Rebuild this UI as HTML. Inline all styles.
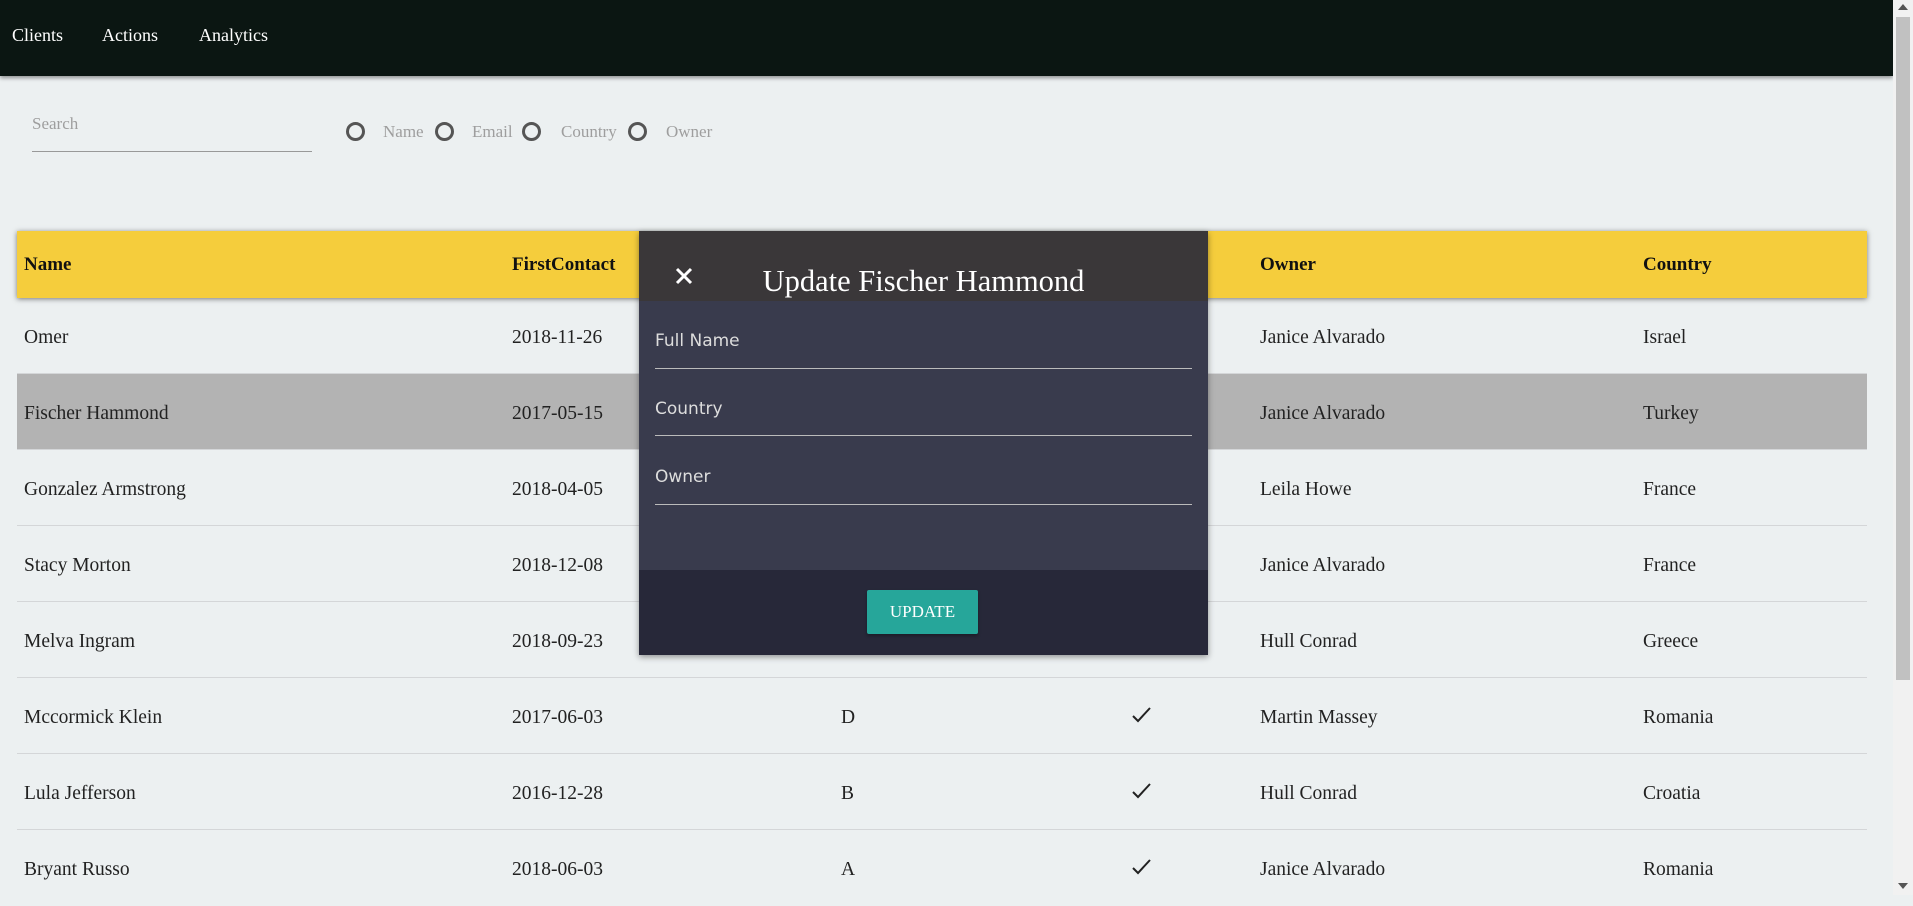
<!DOCTYPE html>
<html><head><meta charset="utf-8"><style>
*{margin:0;padding:0;box-sizing:border-box}
body{width:1913px;height:895px;overflow:hidden;background:#ecf0f1;font-family:"Liberation Serif",serif;position:relative;color:#222}
.a{position:absolute;white-space:nowrap}
.nav{left:0;top:0;width:1893px;height:76px;background:#0b1612;box-shadow:0 2px 4px rgba(0,0,0,.4)}
.nav span{position:absolute;top:25px;color:#fff;font-size:18px}
.sb{left:1893px;top:0;width:20px;height:895px;background:#f1f1f1}
.thumb{left:1896px;top:17px;width:14px;height:663px;background:#c1c1c1}
.rad{width:19px;height:19px;border:3px solid #555;border-radius:50%;top:121px}
.lbl{top:122px;color:#9e9e9e;font-size:17px}
.hdr{left:17px;top:231px;width:1850px;height:67px;background:#f5cd3c;box-shadow:0 1px 5px rgba(0,0,0,.5)}
.hdr span{position:absolute;top:23px;font-weight:bold;font-size:19px;color:#111}
.row{left:17px;width:1850px;height:76px;border-bottom:1px solid #d4d6d8}
.row span{position:absolute;top:29px;font-size:19.5px;color:#222}
.chk{position:absolute;top:25px;left:1112px}
.modal{left:639px;top:231px;width:569px;height:424px;box-shadow:0 2px 6px rgba(0,0,0,.4)}
.field{position:absolute;left:16px;width:537px;border-bottom:1px solid #bbb;height:0}
.flab{position:absolute;left:16px;color:#ddd;font-family:"DejaVu Sans","Liberation Sans",sans-serif;font-size:17px}
</style></head><body>
<div class="a nav"><span style="left:12px">Clients</span><span style="left:102px">Actions</span><span style="left:199px">Analytics</span></div>
<div class="a sb"></div><div class="a thumb"></div>
<div class="a" style="left:1898px;top:883px;width:0;height:0;border-left:5px solid transparent;border-right:5px solid transparent;border-top:6px solid #555"></div>
<div class="a" style="left:1898px;top:4px;width:0;height:0;border-left:5px solid transparent;border-right:5px solid transparent;border-bottom:6px solid #555"></div>

<div class="a" style="left:32px;top:114px;color:#9e9e9e;font-size:17px">Search</div>
<div class="a" style="left:32px;top:151px;width:280px;border-bottom:1px solid #999"></div>
<div class="a rad" style="left:346px;top:122px"></div><div class="a lbl" style="left:383px">Name</div>
<div class="a rad" style="left:435px;top:122px"></div><div class="a lbl" style="left:472px">Email</div>
<div class="a rad" style="left:522px;top:122px"></div><div class="a lbl" style="left:561px">Country</div>
<div class="a rad" style="left:628px;top:122px"></div><div class="a lbl" style="left:666px">Owner</div>

<div class="a hdr"><span style="left:7px">Name</span><span style="left:495px">FirstContact</span><span style="left:824px">EmailType</span><span style="left:1109px">Sold</span><span style="left:1243px">Owner</span><span style="left:1626px">Country</span></div>

<div class="a row" style="top:298px"><span style="left:7px">Omer</span><span style="left:495px">2018-11-26</span><span style="left:824px">B</span><svg class="chk" width="24" height="24" viewBox="0 0 24 24"><path d="M4 13l5 5L21 5" fill="none" stroke="#222" stroke-width="2"/></svg><span style="left:1243px">Janice Alvarado</span><span style="left:1626px">Israel</span></div>
<div class="a row" style="top:374px;background:#b3b3b3"><span style="left:7px">Fischer Hammond</span><span style="left:495px">2017-05-15</span><span style="left:1243px">Janice Alvarado</span><span style="left:1626px">Turkey</span></div>
<div class="a row" style="top:450px"><span style="left:7px">Gonzalez Armstrong</span><span style="left:495px">2018-04-05</span><span style="left:1243px">Leila Howe</span><span style="left:1626px">France</span></div>
<div class="a row" style="top:526px"><span style="left:7px">Stacy Morton</span><span style="left:495px">2018-12-08</span><span style="left:1243px">Janice Alvarado</span><span style="left:1626px">France</span></div>
<div class="a row" style="top:602px"><span style="left:7px">Melva Ingram</span><span style="left:495px">2018-09-23</span><span style="left:1243px">Hull Conrad</span><span style="left:1626px">Greece</span></div>
<div class="a row" style="top:678px"><span style="left:7px">Mccormick Klein</span><span style="left:495px">2017-06-03</span><span style="left:824px">D</span><svg class="chk" width="24" height="24" viewBox="0 0 24 24"><path d="M4 13l5 5L21 5" fill="none" stroke="#222" stroke-width="2"/></svg><span style="left:1243px">Martin Massey</span><span style="left:1626px">Romania</span></div>
<div class="a row" style="top:754px"><span style="left:7px">Lula Jefferson</span><span style="left:495px">2016-12-28</span><span style="left:824px">B</span><svg class="chk" width="24" height="24" viewBox="0 0 24 24"><path d="M4 13l5 5L21 5" fill="none" stroke="#222" stroke-width="2"/></svg><span style="left:1243px">Hull Conrad</span><span style="left:1626px">Croatia</span></div>
<div class="a row" style="top:830px;border:none"><span style="left:7px">Bryant Russo</span><span style="left:495px">2018-06-03</span><span style="left:824px">A</span><svg class="chk" width="24" height="24" viewBox="0 0 24 24"><path d="M4 13l5 5L21 5" fill="none" stroke="#222" stroke-width="2"/></svg><span style="left:1243px">Janice Alvarado</span><span style="left:1626px">Romania</span></div>

<div class="a modal">
 <div class="a" style="left:0;top:0;width:569px;height:70px;background:#3a3739"></div>
 <div class="a" style="left:0;top:70px;width:569px;height:269px;background:#393b4d"></div>
 <div class="a" style="left:0;top:339px;width:569px;height:85px;background:#272839"></div>
 <svg class="a" style="left:35px;top:35px" width="20" height="20" viewBox="0 0 20 20"><path d="M3 3L17 17M17 3L3 17" stroke="#fff" stroke-width="3"/></svg>
 <div class="a" style="left:0;width:569px;text-align:center;top:33px;color:#fff;font-size:30.5px"><span style="margin-left:0px">Update Fischer Hammond</span></div>
 <div class="flab" style="top:100px">Full Name</div><div class="field" style="top:137px"></div>
 <div class="flab" style="top:168px">Country</div><div class="field" style="top:204px"></div>
 <div class="flab" style="top:236px">Owner</div><div class="field" style="top:273px"></div>
 <div class="a" style="left:228px;top:359px;width:111px;height:44px;background:#26a69a;border-radius:2px;box-shadow:0 2px 3px rgba(0,0,0,.3);color:#fff;font-size:17px;text-align:center;line-height:44px">UPDATE</div>
</div>
</body></html>
